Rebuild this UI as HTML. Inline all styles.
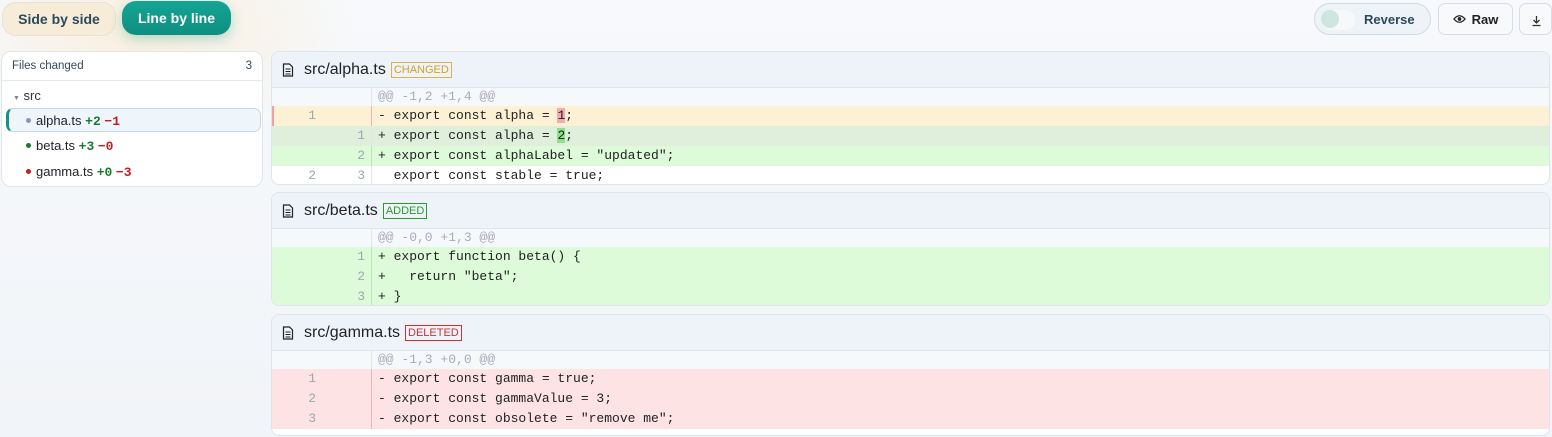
<!DOCTYPE html>
<html><head><meta charset="utf-8"><style>
*{box-sizing:border-box;margin:0;padding:0}
body{width:1552px;height:437px;overflow:hidden;font-family:"Liberation Sans",sans-serif;background:linear-gradient(180deg,#f7f9fc,#f1f4f8);position:relative}
.glow{position:absolute;left:-60px;top:-80px;width:420px;height:220px;background:radial-gradient(ellipse at center,rgba(250,232,200,.6),rgba(250,232,200,0) 70%)}
.btn{position:absolute;height:34px;border-radius:14px;font-weight:bold;font-size:14px;display:flex;align-items:center;justify-content:center}
.sbs{left:2px;top:2px;width:114px;background:#f7ecd8;border:1px solid #e6e2d6;color:#2c4a5a}
.lbl{left:122px;top:1px;width:109px;background:linear-gradient(#14a594,#0f8e80);color:#fff;box-shadow:0 4px 12px rgba(20,160,140,.3)}
.rev{position:absolute;left:1314px;top:3px;width:117px;height:32px;border:1px solid #cfdbe4;border-radius:16px;background:#eef3f7;font-weight:bold;font-size:13px;color:#2c4a5a}
.rev .k{position:absolute;left:6px;top:6px;width:34px;height:20px;border-radius:10px;background:#f6f8fa}
.rev .d{position:absolute;left:6px;top:6px;width:18px;height:18px;border-radius:50%;background:#cde6df}
.rev span{position:absolute;left:49px;top:8px}
.raw{position:absolute;left:1438px;top:3px;width:75px;height:32px;border:1px solid #d6dde4;border-radius:7px;background:#f7f9fb;font-weight:bold;font-size:13px;color:#222;display:flex;align-items:center;justify-content:center;gap:6px}
.dl{position:absolute;left:1519px;top:3px;width:33px;height:32px;border:1px solid #d6dde4;border-radius:7px;background:#f7f9fb}
.side{position:absolute;left:1px;top:51px;width:262px;height:136px;background:#fff;border:1px solid #dfe6ec;border-radius:10px;font-size:12px;color:#223}
.side .h{height:29px;border-bottom:1px solid #e3e8ee;padding:8px 10px;font-size:11.5px;color:#34495a;display:flex;justify-content:space-between}
.side .r{position:absolute;font-size:13px}
.g{color:#1a7a2e;font-weight:bold;font-family:"Liberation Mono",monospace}
.rd{color:#c0201e;font-weight:bold;font-family:"Liberation Mono",monospace}
.dot{display:inline-block;width:5px;height:5px;border-radius:50%;margin-right:5px;vertical-align:2px}
.card{position:absolute;left:271px;width:1279px;background:#fff;border:1px solid #dde5ec;border-radius:8px;overflow:hidden}
.ch{height:36px;background:#eef3fa;border-bottom:1px solid #dde5ec;display:flex;align-items:center;padding-left:10px;font-size:16px;color:#222}
.ch svg{margin-right:10px}
.tag{font-size:11px;border:1px solid;padding:1px 2px;margin-left:5px;line-height:12px}
.row{height:20px;display:flex;font-family:"Liberation Mono",monospace;font-size:13px;line-height:20px;color:#222}
.row.hk{height:18px;line-height:18px;background:#f6f9fc;color:#aab}
.n{width:50px;text-align:right;color:#9aa;padding-right:6px}
.n2{width:50px;text-align:right;color:#9aa;padding-right:6px;border-right:1px solid #e0e6ea}
.c{padding-left:6px;white-space:pre}
.del{background:#fde3e4}.del .n2{border-right-color:#f0b4b6}
.mod{background:#fcf1d4}
.add{background:#ddfbd9}.add .n2{border-right-color:#b9e4b4}
.add2{background:#dfefdc}
</style></head><body>
<div class="glow"></div>
<div class="btn sbs">Side by side</div>
<div class="btn lbl">Line by line</div>
<div class="rev"><div class="k"></div><div class="d"></div><span>Reverse</span></div>
<div class="raw"><svg width="13" height="10" viewBox="0 0 14 10"><path d="M1 5Q7-2 13 5Q7 12 1 5Z" fill="none" stroke="#222" stroke-width="1.4"/><circle cx="7" cy="5" r="2" fill="#222"/></svg>Raw</div>
<div class="dl"><svg width="33" height="32"><path d="M16.5 12v7M13.5 16l3 3 3-3M12.5 21.5h8" stroke="#333" stroke-width="1.3" fill="none"/></svg></div>
<div class="side">
<div class="h"><span>Files changed</span><span>3</span></div>
<div class="r" style="left:11px;top:36px;color:#333"><span style="font-size:7px;color:#789">▼</span> src</div>
<div style="position:absolute;left:4px;top:56px;width:255px;height:24px;border:1px solid #c4dbe6;border-left:3px solid #1b8f84;border-radius:7px;background:#eef5fb"></div>
<div class="r" style="left:24px;top:61px"><span class="dot" style="background:#8a9aaa"></span>alpha.ts <span class="g">+2</span> <span class="rd">−1</span></div>
<div class="r" style="left:24px;top:86px"><span class="dot" style="background:#1a7a2e"></span>beta.ts <span class="g">+3</span> <span class="rd">−0</span></div>
<div class="r" style="left:24px;top:112px"><span class="dot" style="background:#c0201e"></span>gamma.ts <span class="g">+0</span> <span class="rd">−3</span></div>
</div>

<div class="card" style="top:51px;height:134px">
<div class="ch"><svg width="12" height="14" viewBox="0 0 12 14"><path d="M1.5 1h6l3 3v9h-9z" fill="none" stroke="#222" stroke-width="1.2"/><path d="M3.5 6h5M3.5 8.5h5M3.5 11h5" stroke="#222"/></svg>src/alpha.ts<span class="tag" style="color:#d4a21c;border-color:#d9b24a">CHANGED</span></div>
<div class="row hk"><div class="n"></div><div class="n2"></div><div class="c">@@ -1,2 +1,4 @@</div></div>
<div class="row mod" style="box-shadow:inset 2px 0 #f0a0a0"><div class="n">1</div><div class="n2" style="border-right-color:#f0b4b6"></div><div class="c">- export const alpha = <span style="background:#f6a9ae">1</span>;</div></div>
<div class="row add2"><div class="n"></div><div class="n2">1</div><div class="c">+ export const alpha = <span style="background:#8fe08a">2</span>;</div></div>
<div class="row add"><div class="n"></div><div class="n2">2</div><div class="c">+ export const alphaLabel = "updated";</div></div>
<div class="row"><div class="n">2</div><div class="n2">3</div><div class="c">  export const stable = true;</div></div>
</div>

<div class="card" style="top:192px;height:114px">
<div class="ch"><svg width="12" height="14" viewBox="0 0 12 14"><path d="M1.5 1h6l3 3v9h-9z" fill="none" stroke="#222" stroke-width="1.2"/><path d="M3.5 6h5M3.5 8.5h5M3.5 11h5" stroke="#222"/></svg>src/beta.ts<span class="tag" style="color:#2a9a2a;border-color:#2a9a2a">ADDED</span></div>
<div class="row hk"><div class="n"></div><div class="n2"></div><div class="c">@@ -0,0 +1,3 @@</div></div>
<div class="row add"><div class="n"></div><div class="n2">1</div><div class="c">+ export function beta() {</div></div>
<div class="row add"><div class="n"></div><div class="n2">2</div><div class="c">+   return "beta";</div></div>
<div class="row add"><div class="n"></div><div class="n2">3</div><div class="c">+ }</div></div>
</div>

<div class="card" style="top:314px;height:122px">
<div class="ch"><svg width="12" height="14" viewBox="0 0 12 14"><path d="M1.5 1h6l3 3v9h-9z" fill="none" stroke="#222" stroke-width="1.2"/><path d="M3.5 6h5M3.5 8.5h5M3.5 11h5" stroke="#222"/></svg>src/gamma.ts<span class="tag" style="color:#d03030;border-color:#d03030">DELETED</span></div>
<div class="row hk"><div class="n"></div><div class="n2"></div><div class="c">@@ -1,3 +0,0 @@</div></div>
<div class="row del"><div class="n">1</div><div class="n2"></div><div class="c">- export const gamma = true;</div></div>
<div class="row del"><div class="n">2</div><div class="n2"></div><div class="c">- export const gammaValue = 3;</div></div>
<div class="row del"><div class="n">3</div><div class="n2"></div><div class="c">- export const obsolete = "remove me";</div></div>
</div>
</body></html>
